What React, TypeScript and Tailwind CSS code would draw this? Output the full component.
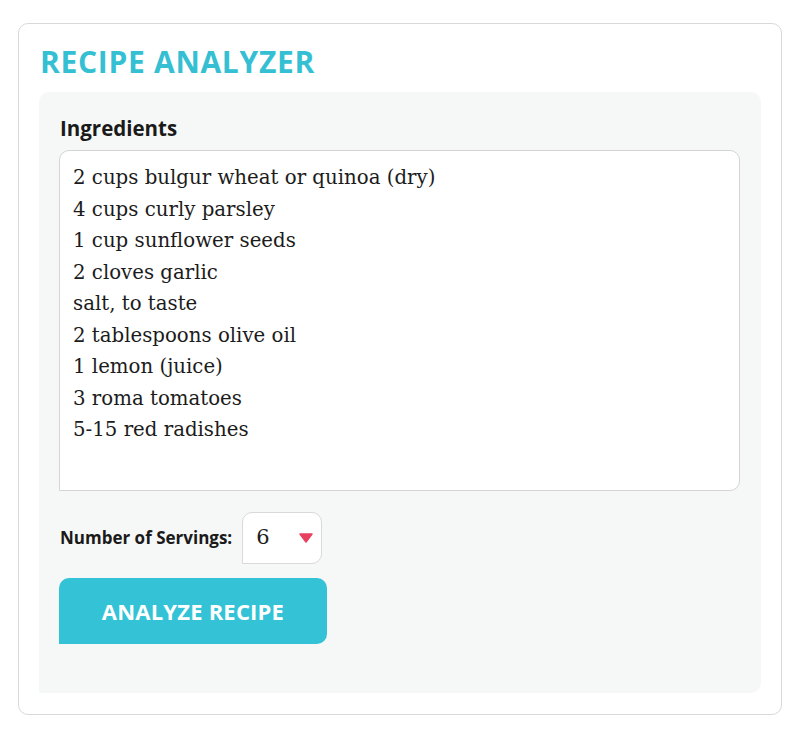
import React from "react";

const ingredients = `2 cups bulgur wheat or quinoa (dry)
4 cups curly parsley
1 cup sunflower seeds
2 cloves garlic
salt, to taste
2 tablespoons olive oil
1 lemon (juice)
3 roma tomatoes
5-15 red radishes`;

export default function App() {
  return (
    <div className="min-h-[741px] w-[800px] bg-white pt-[23px] pl-[18px] font-['Open_Sans',sans-serif]">
      <div className="w-[764px] h-[692px] rounded-[10px] border border-[#d9d9d9] bg-white pt-[17px] px-[20px]">
        <h1 className="text-[30px] leading-[42px] font-bold tracking-[0.7px] text-[#35bfd3] pl-[1px]">
          RECIPE ANALYZER
        </h1>
        <div className="mt-[9px] h-[601px] rounded-[10px] rounded-bl-none bg-[#f6f7f7] pt-[22px] px-[20px]">
          <label className="block text-[20.5px] leading-[28px] font-bold text-[#1a1a1a] pl-[1px]">
            Ingredients
          </label>
          <textarea
            defaultValue={ingredients}
            className="mt-[8px] block w-[681px] h-[341px] resize-none rounded-[10px] rounded-bl-none border border-[#d4d4d4] bg-white px-[13px] pt-[11px] text-[19.75px] leading-[31.5px] text-[#1c1c1c] font-['DejaVu_Serif',serif] outline-none"
          />
          <div className="mt-[21px] flex items-center">
            <span className="text-[17px] font-bold text-[#1a1a1a] pl-[1px]">Number of Servings:</span>
            <div className="ml-[10px] flex h-[52px] w-[80px] items-center justify-between rounded-[10px] rounded-bl-none border border-[#d9d9d9] bg-white pl-[13px] pr-[8px]">
              <span className="text-[21px] text-[#1c1c1c] font-['DejaVu_Serif',serif]">6</span>
              <svg width="14" height="10" viewBox="0 0 14 10">
                <path d="M1 1 L13 1 L7 9 Z" fill="#e8405f" stroke="#e8405f" strokeWidth="1.5" strokeLinejoin="round" />
              </svg>
            </div>
          </div>
          <button className="mt-[14px] flex h-[66px] w-[268px] items-center justify-center rounded-[10px] rounded-bl-none bg-[#34c3d6] text-[22px] font-bold tracking-[0.2px] text-white">
            ANALYZE RECIPE
          </button>
        </div>
      </div>
    </div>
  );
}
